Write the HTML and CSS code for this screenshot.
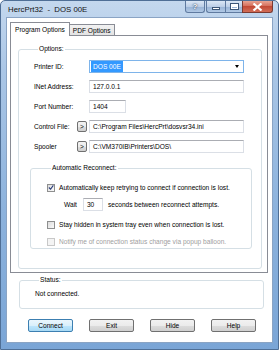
FILE: index.html
```html
<!DOCTYPE html>
<html lang="en">
<head>
    <meta charset="UTF-8">
    <title>HercPrt32 - DOS 00E</title>
    <link rel="stylesheet" href="styles.css">
</head>
<body>
    <div class="window">
        <div class="titlebar">
            <span class="title">HercPrt32  -  DOS 00E</span>
            <div class="caption help">?</div>
            <div class="caption-group">
                <div class="caption min"><span class="min-bar"></span></div>
                <div class="caption max"><span class="max-box"></span></div>
                <div class="caption close">
                    <svg width="11" height="8" viewBox="0 0 11 8"><path d="M1.5 0.5 L9.5 7.5 M9.5 0.5 L1.5 7.5" stroke="#fff" stroke-width="2.2"/></svg>
                </div>
            </div>
        </div>

        <div class="client">
            <div class="tabs">
                <div class="tab active">Program Options</div>
                <div class="tab">PDF Options</div>
            </div>

            <div class="tab-panel">
                <fieldset class="group options">
                    <legend>Options:</legend>

                    <div class="row">
                        <span class="label">Printer ID:</span>
                        <div class="field combo focused">
                            <span class="selected">DOS 00E</span>
                            <span class="arrow"></span>
                        </div>
                    </div>

                    <div class="row">
                        <span class="label">INet Address:</span>
                        <div class="field">127.0.0.1</div>
                    </div>

                    <div class="row">
                        <span class="label">Port Number:</span>
                        <div class="field short">1404</div>
                    </div>

                    <div class="row gap-big">
                        <span class="label">Control File:</span>
                        <div class="browse">&gt;</div>
                        <div class="field">C:\Program Files\HercPrt\dosvsr34.ini</div>
                    </div>

                    <div class="row gap-big">
                        <span class="label">Spooler</span>
                        <div class="browse">&gt;</div>
                        <div class="field">C:\VM370IB\Printers\DOS\</div>
                    </div>

                    <fieldset class="group reconnect">
                        <legend>Automatic Reconnect:</legend>

                        <div class="check-row">
                            <span class="checkbox">
                                <svg width="7" height="7" viewBox="0 0 7 7"><path d="M1 3.5 L3 5.5 L6.2 1" fill="none" stroke="#2a3d7a" stroke-width="1.3"/></svg>
                            </span>
                            <span>Automatically keep retrying to connect if connection is lost.</span>
                        </div>

                        <div class="wait-row">
                            <span>Wait</span>
                            <div class="field tiny">30</div>
                            <span>seconds between reconnect attempts.</span>
                        </div>

                        <div class="check-row">
                            <span class="checkbox"></span>
                            <span>Stay hidden in system tray even when connection is lost.</span>
                        </div>

                        <div class="check-row disabled">
                            <span class="checkbox"></span>
                            <span>Notify me of connection status change via popup balloon.</span>
                        </div>
                    </fieldset>
                </fieldset>
            </div>

            <fieldset class="group status">
                <legend>Status:</legend>
                <p>Not connected.</p>
            </fieldset>

            <div class="buttons">
                <div class="button default">Connect</div>
                <div class="button">Exit</div>
                <div class="button">Hide</div>
                <div class="button">Help</div>
            </div>
        </div>
    </div>
</body>
</html>
```

FILE: styles.css
```css
* {
    margin: 0;
    padding: 0;
    box-sizing: border-box;
}

body {
    width: 279px;
    height: 350px;
    overflow: hidden;
    font-family: 'Liberation Sans', Arial, sans-serif;
    font-size: 6.6px;
    color: #000;
    background: #fff;
}

/* window frame */
.window {
    width: 279px;
    height: 350px;
    display: flex;
    flex-direction: column;
    padding: 0 5px 6px 5px;
    background: linear-gradient(to bottom, #c4d8ee 0, #aac6e6 20%, #8db3dd 60%, #7aa5d6 100%);
    border: 1px solid #4f6f96;
    border-radius: 5px 5px 0 0;
}

.titlebar {
    height: 16px;
    display: flex;
    align-items: flex-start;
}

.title {
    white-space: pre;
    font-size: 7.8px;
    padding: 4px 0 0 2px;
    color: #111;
}

.caption {
    flex-shrink: 0;
    height: 12px;
    display: flex;
    align-items: center;
    justify-content: center;
    border: 1px solid #5f7aa0;
    border-top: none;
    background: linear-gradient(to bottom, #dbe7f5 0, #bccfe7 50%, #98b3d6 51%, #b0c8e4 100%);
}

.help {
    width: 20px;
    margin-left: auto;
    margin-right: 1px;
    border-radius: 0 0 3px 3px;
    font-size: 8px;
    font-weight: bold;
    color: #fff;
    text-shadow: 0 0 1px #2c4564, 0 0 2px #2c4564;
}

.caption-group {
    display: flex;
    flex-shrink: 0;
}

.min {
    width: 19px;
    border-right: none;
    border-radius: 0 0 0 3px;
}

.min-bar {
    width: 8px;
    height: 3px;
    margin-top: 4px;
    background: #fff;
    border: 1px solid #3c5677;
}

.max {
    width: 17px;
    border-right: none;
}

.max-box {
    width: 9px;
    height: 7px;
    border: 1px solid #3c5677;
    box-shadow: inset 0 0 0 1px #fff, inset 0 2px 0 1px #fff;
}

.close {
    width: 31px;
    border-color: #7a3a32;
    border-radius: 0 0 3px 0;
    background: linear-gradient(to bottom, #e8a493 0, #d56f5c 45%, #c24a36 50%, #d26d57 100%);
}

/* client area */
.client {
    flex: 1;
    display: flex;
    flex-direction: column;
    background: #fff;
    border: 1px solid #8aa4c4;
    padding: 4px 4px 0 3px;
}

.tabs {
    display: flex;
    align-items: flex-end;
    height: 13px;
}

.tab {
    height: 11px;
    padding: 0 3px;
    display: flex;
    align-items: center;
    border: 1px solid #898c95;
    border-bottom: none;
    border-left: none;
    background: linear-gradient(to bottom, #f2f2f2, #e3e3e3);
}

.tab.active {
    height: 14px;
    margin-bottom: -1px;
    padding: 0 4px 1px 4px;
    border-left: 1px solid #898c95;
    background: #fff;
    position: relative;
}

.tab-panel {
    height: 238px;
    border: 1px solid #898c95;
    background: #fff;
    padding: 9px 7px 0 7px;
}

/* group boxes */
.group {
    border: 1px solid #d5dfe5;
    border-radius: 3px;
    min-width: 0;
}

.group legend {
    margin-left: 4px;
    padding: 0 1px;
    line-height: 8px;
}

.options {
    height: 224px;
    width: 244px;
    padding: 7px 0 0 15px;
}

.row {
    display: flex;
    align-items: center;
    height: 13px;
    margin-bottom: 7px;
}

.row.gap-big {
    margin-top: 2px;
    margin-bottom: 7px;
}

.label {
    width: 55px;
}

.field {
    width: 155px;
    height: 13px;
    padding: 0 3px;
    display: flex;
    align-items: center;
    white-space: nowrap;
    border: 1px solid #dbdfe6;
    border-top-color: #abadb3;
    background: #fff;
}

.field.short {
    width: 37px;
}

.field.tiny {
    width: 20px;
    margin: 0 5px 0 6px;
}

.combo {
    padding: 0 0 0 1px;
}

.combo.focused {
    border-color: #7eb4ea;
}

.selected {
    background: #3399ff;
    color: #fff;
    padding: 0 2px;
    height: 11px;
    line-height: 11px;
}

.arrow {
    margin-left: auto;
    margin-right: 4px;
    border-left: 2.5px solid transparent;
    border-right: 2.5px solid transparent;
    border-top: 3px solid #000;
}

.browse {
    width: 10px;
    height: 11px;
    margin: 0 2px 0 -12px;
    display: flex;
    align-items: center;
    justify-content: center;
    border: 1px solid #707070;
    border-radius: 2px;
    background: linear-gradient(to bottom, #f2f2f2 0, #ebebeb 50%, #dddddd 51%, #cfcfcf 100%);
}

.reconnect {
    width: 222px;
    height: 85px;
    margin: 11px 0 0 -4px;
    padding: 11px 0 0 16px;
}

.check-row {
    display: flex;
    align-items: center;
    height: 9px;
    margin-bottom: 8px;
}

.checkbox {
    width: 8px;
    height: 8px;
    margin-right: 4px;
    display: flex;
    align-items: center;
    justify-content: center;
    border: 1px solid #8e8f8f;
    background: linear-gradient(135deg, #dcdcdc, #fafafa);
}

.disabled {
    color: #a0a0a0;
}

.disabled .checkbox {
    border-color: #c8c8c8;
    background: #f4f4f4;
}

.wait-row {
    display: flex;
    align-items: center;
    height: 13px;
    margin: -2px 0 9px 17px;
}

.status {
    width: 245px;
    height: 33px;
    margin: 3px 0 0 9px;
    padding: 6px 0 0 15px;
}

.buttons {
    display: flex;
    gap: 16px;
    margin: 10px 0 0 18px;
}

.button {
    width: 45px;
    height: 13px;
    display: flex;
    align-items: center;
    justify-content: center;
    border: 1px solid #707070;
    border-radius: 2px;
    background: linear-gradient(to bottom, #f2f2f2 0, #ebebeb 50%, #dddddd 51%, #cfcfcf 100%);
}

.button.default {
    border-color: #3c7fb1;
    background: linear-gradient(to bottom, #eaf6fd 0, #d9f0fc 50%, #bee6fd 51%, #a7d9f5 100%);
}
```
